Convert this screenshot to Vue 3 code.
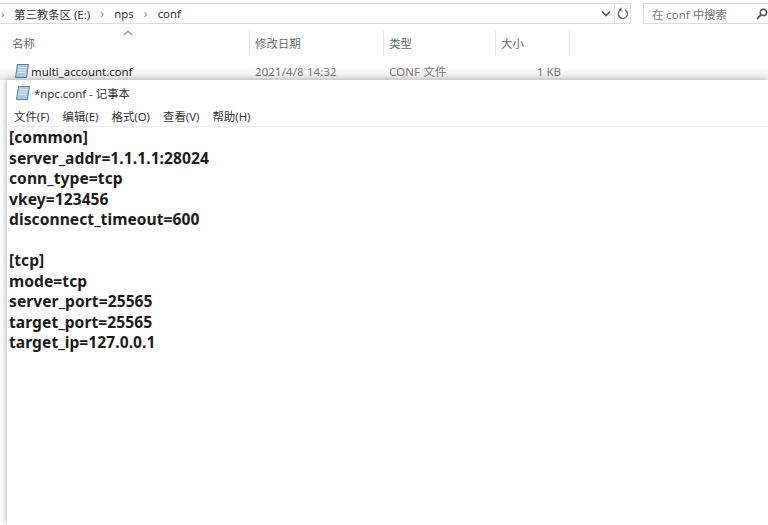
<script setup>
const columns = [
  { label: '名称', cls: 'col-name' },
  { label: '修改日期', cls: 'col-date' },
  { label: '类型', cls: 'col-type' },
  { label: '大小', cls: 'col-size' }
]
const menus = ['文件(F)', '编辑(E)', '格式(O)', '查看(V)', '帮助(H)']
const lines = ['[common]', 'server_addr=1.1.1.1:28024', 'conn_type=tcp', 'vkey=123456', 'disconnect_timeout=600', '', '[tcp]', 'mode=tcp', 'server_port=25565', 'target_port=25565', 'target_ip=127.0.0.1']
</script>

<template>
  <div class="screen">
    <section class="explorer">
      <div class="toolbar">
        <div class="address">
          <span class="crumb-first">›</span>
          <span class="crumb">第三教条区 (E:)</span>
          <span class="sep">›</span>
          <span class="crumb">nps</span>
          <span class="sep">›</span>
          <span class="crumb">conf</span>
          <span class="spacer"></span>
          <svg class="chev" width="10" height="7" viewBox="0 0 10 7"><path d="M1 1.5 5 5.5 9 1.5" fill="none" stroke="#555" stroke-width="1.6"/></svg>
          <span class="refresh">
            <svg width="12" height="13" viewBox="0 0 12 13"><path d="M4 2.6A4.6 4.6 0 1 0 8.2 2.8" fill="none" stroke="#666" stroke-width="1.4"/><path d="M4.6 0.2V4.4L1.8 2.4Z" fill="#666"/></svg>
          </span>
        </div>
        <div class="search">
          <span>在 conf 中搜索</span>
          <svg width="12" height="12" viewBox="0 0 12 12"><circle cx="7.4" cy="4.4" r="3.2" fill="none" stroke="#555" stroke-width="1.5"/><path d="M5 6.8 1 10.8" stroke="#555" stroke-width="1.8"/></svg>
        </div>
      </div>
      <div class="header">
        <div v-for="c in columns" :key="c.label" class="col" :class="c.cls">{{ c.label }}</div>
        <svg class="sort" width="10" height="6" viewBox="0 0 10 6"><path d="M1 5 5 1 9 5" fill="none" stroke="#999" stroke-width="1.2"/></svg>
      </div>
      <div class="row">
        <div class="cell-name">
          <svg class="note" width="16" height="16" viewBox="0 0 16 16"><path d="M3.5 1.5H14.5L12.5 14.5H1.5Z" fill="#a9cde6" stroke="#5f7f99"/><path d="M4.5 4.5H12.5M4 7H12M3.7 9.5H11.7" stroke="#dcecf6"/></svg>
          <span>multi_account.conf</span>
        </div>
        <div class="cell-date">2021/4/8 14:32</div>
        <div class="cell-type">CONF 文件</div>
        <div class="cell-size">1 KB</div>
      </div>
    </section>
    <section class="notepad">
      <div class="title">
        <svg class="note" width="16" height="16" viewBox="0 0 16 16"><path d="M3.5 1.5H14.5L12.5 14.5H1.5Z" fill="#a9cde6" stroke="#5f7f99"/><path d="M4.5 4.5H12.5M4 7H12M3.7 9.5H11.7" stroke="#dcecf6"/></svg>
        <span>*npc.conf - 记事本</span>
      </div>
      <div class="menu">
        <span v-for="m in menus" :key="m">{{ m }}</span>
      </div>
      <div class="editor">
        <div v-for="(l, i) in lines" :key="i" class="line">{{ l }}</div>
      </div>
    </section>
  </div>
</template>

<style scoped>
.screen {
  width: 768px;
  height: 525px;
  overflow: hidden;
  display: flex;
  flex-direction: column;
  background: #fff;
  font-family: "Noto Sans", "Noto Sans CJK SC", sans-serif;
  font-size: 11.4px;
  color: #333;
}
.explorer {
  height: 80px;
  flex: none;
  color: #666;
  background: linear-gradient(#fff 66px, #ececec 79px);
}
.toolbar {
  height: 30px;
  padding-top: 3px;
  box-sizing: border-box;
  display: flex;
  align-items: flex-start;
}
.address {
  width: 631px;
  height: 21px;
  box-sizing: border-box;
  display: flex;
  align-items: center;
  border: 1px solid #dcdcdc;
  border-left: none;
  color: #333;
}
.crumb-first { width: 14px; padding-left: 1px; box-sizing: border-box; color: #888; }
.sep { width: 24px; text-align: center; color: #888; font-size: 12px; }
.spacer { flex: 1; }
.chev { margin-right: 3px; }
.refresh {
  width: 15px;
  height: 19px;
  border-left: 1px solid #dcdcdc;
  display: flex;
  align-items: center;
  justify-content: center;
}
.search {
  width: 125px;
  height: 21px;
  margin-left: 12px;
  box-sizing: border-box;
  border: 1px solid #dcdcdc;
  border-right: none;
  padding: 0 0 0 8px;
  display: flex;
  align-items: center;
  justify-content: space-between;
  color: #777;
}
.header {
  position: relative;
  height: 26px;
  display: flex;
  color: #5f6b76;
}
.col {
  box-sizing: border-box;
  height: 26px;
  line-height: 28px;
  padding-left: 5px;
  border-right: 1px solid #e6e6e6;
}
.col-name { width: 250px; padding-left: 12px; }
.col-date { width: 134px; }
.col-type { width: 112px; }
.col-size { width: 74px; }
.sort { position: absolute; left: 123px; top: 0; }
.row {
  height: 23px;
  box-sizing: border-box;
  display: flex;
  align-items: flex-end;
  padding-bottom: 0;
}
.cell-name { width: 255px; padding-left: 14px; box-sizing: border-box; display: flex; align-items: center; gap: 1px; color: #222; }
.cell-date { width: 134px; color: #777; letter-spacing: 0.15px; }
.cell-type { width: 103px; color: #777; letter-spacing: 0.2px; }
.cell-size { width: 69px; text-align: right; color: #777; }
.notepad {
  flex: 1;
  margin-left: 7px;
  background: #fff;
  box-shadow: -2px -1px 5px rgba(0, 0, 0, 0.22);
  position: relative;
  min-height: 0;
}
.title {
  height: 26px;
  display: flex;
  align-items: center;
  gap: 3px;
  padding-left: 8px;
  color: #333;
}
.menu {
  height: 20px;
  display: flex;
  align-items: center;
  gap: 13px;
  padding-left: 7px;
  color: #333;
  border-bottom: 1px solid #ececec;
}
.editor {
  padding: 0 0 0 2px;
  color: #1c1c1c;
  font-size: 15.6px;
  font-weight: 700;
  line-height: 20.5px;
  letter-spacing: 0.06px;
}
.line { height: 20.5px; white-space: pre; }
</style>
